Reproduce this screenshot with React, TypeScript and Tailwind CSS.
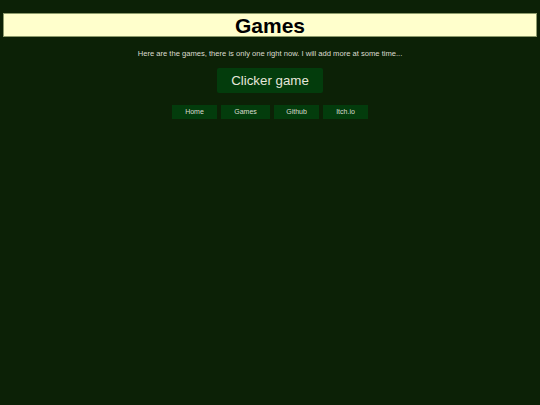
export default function App() {
  const links = ["Home", "Games", "Github", "Itch.io"];
  return (
    <div className="min-h-[405px] bg-[#0c2106] pt-[13px] font-['Liberation_Sans',Arial,sans-serif]">
      <h1 className="mx-[3px] h-[24px] border border-[#8c9a6a] bg-[#ffffcc] text-center text-[21px] font-bold leading-[23px] text-black">
        Games
      </h1>
      <p className="mt-[12px] text-center text-[7.6px] leading-[10px] text-[#dcdcd0]">
        Here are the games, there is only one right now. I will add more at some time...
      </p>
      <div className="mt-[9px] flex justify-center">
        <a className="flex h-[25px] w-[106px] items-center justify-center rounded-[2px] bg-[#033c0c] text-[13.3px] text-[#e6e6da]">
          Clicker game
        </a>
      </div>
      <nav className="mt-[12px] flex justify-center gap-[4px]">
        {links.map((l, i) => (
          <a
            key={l}
            className={
              "flex h-[14px] items-center justify-center bg-[#033c0c] text-[7px] text-[#dcdcd0] " +
              (i === 1 ? "w-[49px]" : "w-[45px]")
            }
          >
            {l}
          </a>
        ))}
      </nav>
    </div>
  );
}
